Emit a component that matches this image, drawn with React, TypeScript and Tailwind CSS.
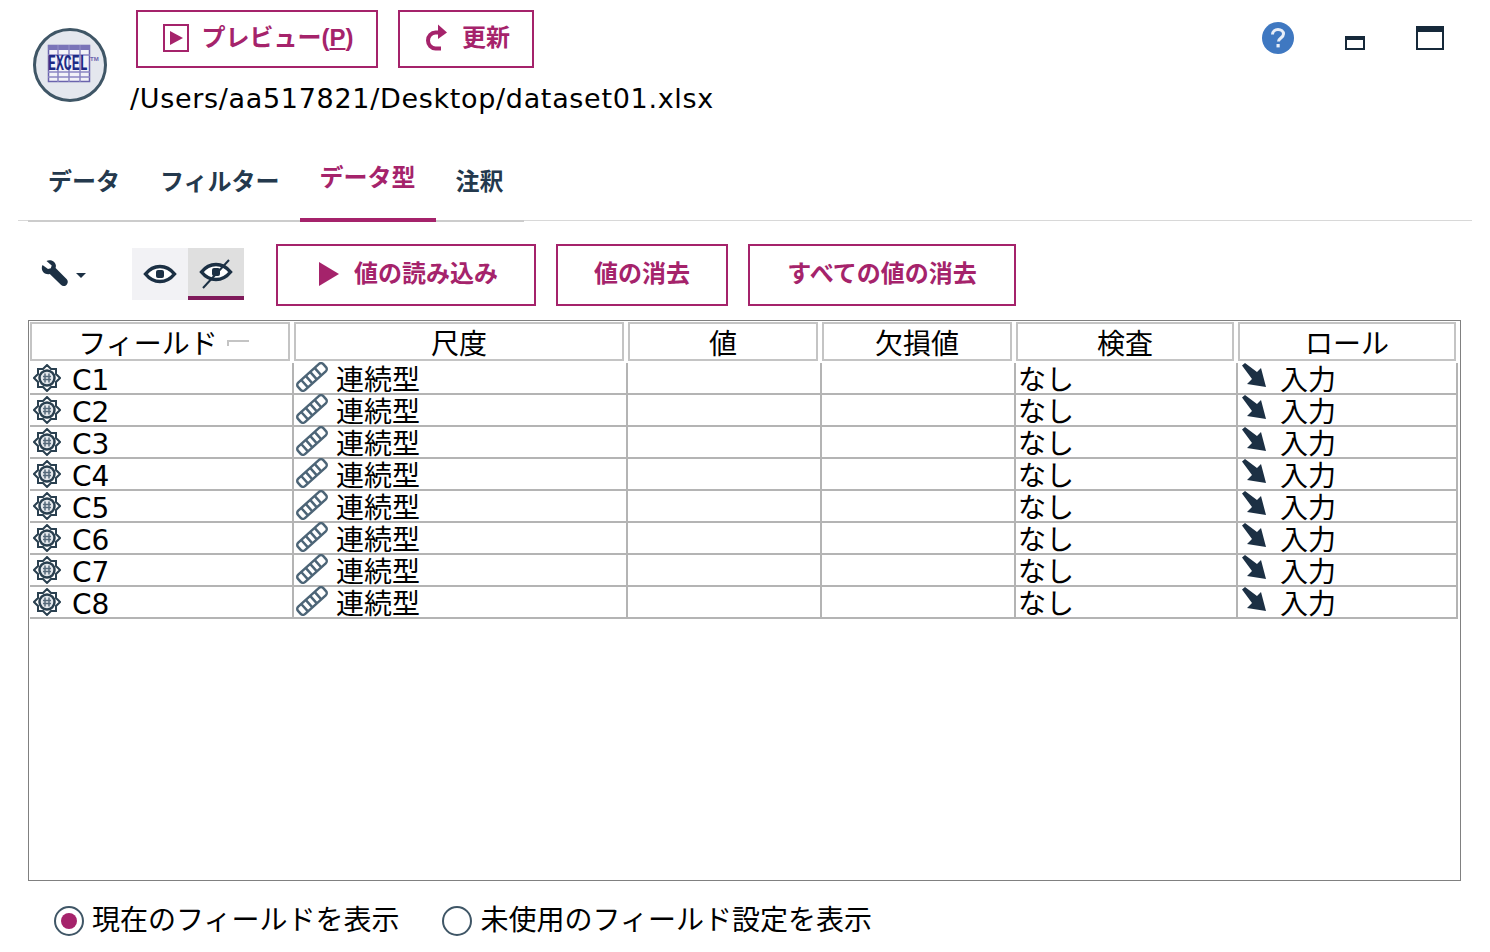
const cjk = "font-['DejaVu_Sans','Noto_Sans_CJK_JP',sans-serif]";

const fields = ["C1", "C2", "C3", "C4", "C5", "C6", "C7", "C8"];
const headers = ["フィールド", "尺度", "値", "欠損値", "検査", "ロール"];

function ExcelLogo() {
  return (
    <svg width="74" height="74" viewBox="0 0 74 74">
      <circle cx="37" cy="37" r="35.5" fill="#e4e7ee" stroke="#3f5666" strokeWidth="3" />
      <rect x="15.5" y="17.5" width="41" height="36" fill="#f2f2f8" stroke="#6a63ad" strokeWidth="1.5" />
      <rect x="15" y="17" width="42" height="5" fill="#7a74b8" />
      <path d="M15 27h42M15 44h42M15 49h42M25 17v37M36 17v37M47 17v37" stroke="#8a85c2" strokeWidth="1.5" />
      <g transform="translate(15 42) scale(0.6 1)">
        <text x="0" y="0" fontSize="22" fontWeight="700" fill="#1d2a86" fontFamily="'Liberation Mono', monospace">EXCEL</text>
      </g>
      <text x="57" y="33" fontSize="6" fontWeight="700" fill="#6a63ad" fontFamily="'Liberation Sans', sans-serif">TM</text>
    </svg>
  );
}

function HelpIcon() {
  return (
    <svg width="32" height="32" viewBox="0 0 32 32">
      <circle cx="16" cy="16" r="16" fill="#3f78c1" />
      <path d="M10.5 12.5c0-3.2 2.5-5 5.5-5s5.5 1.8 5.5 4.6c0 3.8-5 4-5 7.4" fill="none" stroke="#e8eef8" strokeWidth="3" />
      <rect x="14.5" y="22" width="3.2" height="3.4" fill="#e8eef8" />
    </svg>
  );
}

function PreviewIcon() {
  return (
    <svg width="26" height="28" viewBox="0 0 26 28">
      <rect x="1" y="1" width="24" height="26" fill="none" stroke="#a5236b" strokeWidth="2" />
      <path d="M7 7l13 7-13 7z" fill="#a5236b" />
    </svg>
  );
}

function RedoIcon() {
  return (
    <svg width="24" height="28" viewBox="0 0 24 28">
      <path d="M17 8.500H11.500a7.500 8 0 0 0-7.500 8 7.500 8 0 0 0 7.500 8H17" fill="none" stroke="#a5236b" strokeWidth="4" />
      <path d="M14 0.500l9 8-9 6.500z" fill="#a5236b" />
    </svg>
  );
}

function WrenchIcon() {
  return (
    <svg width="28" height="28" viewBox="0 0 28 28">
      <path d="M1.500 5l5.500 4 2.800-.8.900-2.800L5.500 1C9.500-.8 14 1.400 14.800 5c.2 1 .1 2-.2 3l11.200 11.200c1.800 1.900.9 5-.9 6.200-1.700 1.100-3.600.9-5-.6L8.800 14c-4.200 1-8-1.700-8-6 0-1 .2-2 .7-3z" fill="#1c3044" />
    </svg>
  );
}

function EyeIcon({ slashed }: { slashed?: boolean }) {
  return (
    <svg width="34" height="36" viewBox="0 0 34 36">
      <path d="M2.500 18c4-5 8.500-7.500 14.500-7.500S27.500 13 31.500 18c-4 5-8.500 7.500-14.500 7.500S6.500 23 2.500 18z" fill="#fff" stroke="#1c3044" strokeWidth="3.500" />
      <rect x="13" y="14" width="8" height="8" rx="2" fill="#1c3044" />
      {slashed && <path d="M30 6L4 34" stroke="#1c3044" strokeWidth="2" />}
    </svg>
  );
}

function FieldIcon() {
  return (
    <svg width="28" height="28" viewBox="0 0 28 28">
      <path d="M14 1l4 4h5v5l4 4-4 4v5h-5l-4 4-4-4H5v-5l-4-4 4-4V5h5z" fill="#fff" stroke="#2a4050" strokeWidth="2" />
      <circle cx="14" cy="14" r="7.500" fill="#e4e8ec" stroke="#2a4050" strokeWidth="2.500" />
      <path d="M12 9.500v9M16 9.500v9M10 12.500h8M10 15.500h8" stroke="#55697a" strokeWidth="1.500" />
    </svg>
  );
}

function RulerIcon() {
  return (
    <svg width="32" height="30" viewBox="0 0 32 30">
      <g transform="rotate(-42 16 15)">
        <rect x="-1" y="10" width="34" height="10" rx="3" fill="#fff" stroke="#4d6577" strokeWidth="2.500" />
        <path d="M6 10v10M12 10v10M18 10v10M24 10v10" stroke="#4d6577" strokeWidth="2.500" />
      </g>
    </svg>
  );
}

function InputArrow() {
  return (
    <svg width="26" height="26" viewBox="0 0 26 26">
      <path d="M1 3.500L4 1l12 9 4-4 5 19-19-3 5-5z" fill="#1c3044" />
    </svg>
  );
}

function OutlineButton({ className, children }: { className: string; children: React.ReactNode }) {
  return (
    <button className={`flex items-center justify-center border-2 border-[#a5236b] bg-white pb-[2px] text-[24px] font-bold text-[#a5236b] ${className}`}>
      {children}
    </button>
  );
}

function Radio({ checked, label }: { checked?: boolean; label: string }) {
  return (
    <label className="flex items-center gap-[8px] text-[28px] leading-[40px] text-black">
      <span className="flex h-[30px] w-[30px] items-center justify-center rounded-full border-2 border-[#3f5666] bg-white">
        {checked && <span className="h-[16px] w-[16px] rounded-full bg-[#a5236b]" />}
      </span>
      {label}
    </label>
  );
}

export default function App() {
  return (
    <div className={`h-[952px] w-[1490px] overflow-hidden bg-white ${cjk}`}>
      {/* header */}
      <div className="flex h-[160px] pl-[33px] pr-[46px]">
        <div className="pt-[28px]">
          <ExcelLogo />
        </div>
        <div className="ml-[27px] flex-1 pt-[10px]">
          <div className="ml-[2px] flex gap-[20px]">
            <OutlineButton className="h-[58px] w-[242px] gap-[12px] pl-[3px]">
              <PreviewIcon />
              <span>プレビュー<span className="font-['Liberation_Sans',sans-serif]">(<span className="underline">P</span>)</span></span>
            </OutlineButton>
            <OutlineButton className="h-[58px] w-[136px] gap-[14px] pl-[2px]">
              <RedoIcon />
              <span>更新</span>
            </OutlineButton>
          </div>
          <div className="-ml-[4px] mt-[11px] text-[27px] leading-[40px] tracking-[0.68px] text-black">/Users/aa517821/Desktop/dataset01.xlsx</div>
        </div>
        <div className="flex gap-[46px] pt-[22px]">
          <HelpIcon />
          <div className="ml-[5px] mt-[14px] h-[14px] w-[20px] border-2 border-t-[4px] border-[#16293a]" />
          <div className="ml-[5px] mt-[4px] h-[24px] w-[28px] border-2 border-t-[6px] border-[#16293a]" />
        </div>
      </div>

      {/* tabs */}
      <div className="relative mx-[18px] flex h-[61px] border-b border-[#d8d8d8] text-[24px] font-bold text-[#24394d]">
        <div className="absolute left-[10px] top-[60px] h-[2px] w-[496px] bg-[#cccccc]" />
        <div className="ml-[30px] pt-[5px] leading-[34px]">データ</div>
        <div className="ml-[40px] pt-[5px] leading-[34px]">フィルター</div>
        <div className="relative ml-[20px] h-[62px] w-[136px] border-b-4 border-[#a5236b] pt-[1px] text-center leading-[34px] text-[#a5236b]">データ型</div>
        <div className="ml-[20px] pt-[5px] leading-[34px]">注釈</div>
      </div>

      {/* toolbar */}
      <div className="mt-[23px] flex h-[62px] pl-[41px]">
        <div className="flex items-center pb-[2px]">
          <WrenchIcon />
          <span className="ml-[7px] mt-[2px] h-0 w-0 border-x-[5px] border-t-[5px] border-x-transparent border-t-[#1c3044]" />
        </div>
        <div className="ml-[46px] mt-[4px] flex h-[52px]">
          <div className="flex w-[56px] items-center justify-center bg-[#f2f2f5]">
            <EyeIcon />
          </div>
          <div className="flex w-[56px] items-center justify-center border-b-4 border-[#7f1a5a] bg-[#dfdfdf]">
            <EyeIcon slashed />
          </div>
        </div>
        <OutlineButton className="ml-[32px] h-[62px] w-[260px] gap-[14px] pl-[4px]">
          <svg width="22" height="26" viewBox="0 0 22 26">
            <path d="M1 1l20 12L1 25z" fill="#a5236b" />
          </svg>
          <span>値の読み込み</span>
        </OutlineButton>
        <OutlineButton className="ml-[20px] h-[62px] w-[172px]">値の消去</OutlineButton>
        <OutlineButton className="ml-[20px] h-[62px] w-[268px]">すべての値の消去</OutlineButton>
      </div>

      {/* table */}
      <div className="ml-[28px] mt-[14px] h-[561px] w-[1433px] border border-[#808080] p-[1px] text-[28px] text-black">
        <div className="grid grid-cols-[264px_334px_194px_194px_222px_222px]">
          {headers.map((h, i) => (
            <div key={h} className="pr-[4px]">
              <div className={`relative h-[39px] border-2 border-[#c4c4c4] text-center leading-[42px] ${i === 0 ? "pr-[24px]" : ""}`}>
                {h}
                {i === 0 && <span className="absolute left-[195px] top-[16px] h-[6px] w-[22px] border-l-2 border-t-2 border-[#c4c4c4]" />}
              </div>
            </div>
          ))}
        </div>
        <div className="mt-[2px] grid grid-cols-[262px_334px_194px_194px_222px_222px]">
          {fields.map((f) => (
            <div key={f} className="contents">
              <div className="flex h-[32px] items-center border-b-2 border-[#b4b4b4] pl-[3px] leading-[32px]">
                <span className="-mt-[1px]">
                  <FieldIcon />
                </span>
                <span className="ml-[11px] mt-[5px]">{f}</span>
              </div>
              <div className="flex h-[32px] items-center border-b-2 border-l-2 border-[#b4b4b4] pl-[2px] leading-[32px]">
                <span className="-mt-[3px]">
                  <RulerIcon />
                </span>
                <span className="ml-[8px] mt-[5px]">連続型</span>
              </div>
              <div className="h-[32px] border-b-2 border-l-2 border-[#b4b4b4]" />
              <div className="h-[32px] border-b-2 border-l-2 border-[#b4b4b4]" />
              <div className="h-[32px] border-b-2 border-l-2 border-[#b4b4b4] pl-[2px] pt-[2px] leading-[32px]">なし</div>
              <div className="flex h-[32px] items-center border-x-2 border-b-2 border-[#b4b4b4] pl-[3px] leading-[32px]">
                <span className="-mt-[6px]">
                  <InputArrow />
                </span>
                <span className="ml-[13px] mt-[5px]">入力</span>
              </div>
            </div>
          ))}
        </div>
      </div>

      {/* radios */}
      <div className="ml-[54px] mt-[20px] flex gap-[43px]">
        <Radio checked label="現在のフィールドを表示" />
        <Radio label="未使用のフィールド設定を表示" />
      </div>
    </div>
  );
}
